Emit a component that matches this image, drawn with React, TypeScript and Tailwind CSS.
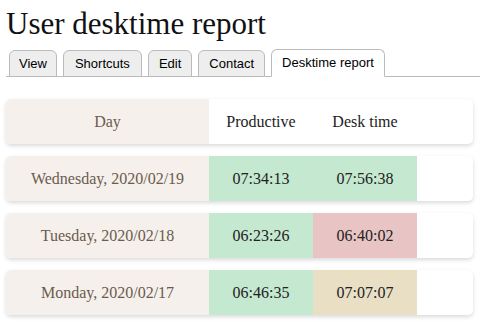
export default function App() {
  const tabs = [
    { label: 'View', pad: 'px-[9px]' },
    { label: 'Shortcuts', pad: 'px-[11px]' },
    { label: 'Edit', pad: 'px-[10px]' },
    { label: 'Contact', pad: 'px-[10px]' },
  ];
  const rows = [
    { day: 'Wednesday, 2020/02/19', prod: '07:34:13', desk: '07:56:38', deskBg: 'bg-[#c5e8d0]' },
    { day: 'Tuesday, 2020/02/18', prod: '06:23:26', desk: '06:40:02', deskBg: 'bg-[#e8c4c4]' },
    { day: 'Monday, 2020/02/17', prod: '06:46:35', desk: '07:07:07', deskBg: 'bg-[#e8dfc4]' },
  ];

  return (
    <div className="w-[480px] h-[322px] bg-white overflow-hidden font-['Liberation_Serif',serif]">
      {/* Title */}
      <h1 className="pl-[6px] pt-[6px] text-[31px] leading-[36px] text-[#111]">User desktime report</h1>

      {/* Tabs */}
      <div className="mt-[7px] ml-[6px] flex items-end gap-[6px] border-b border-[#bbb] pl-[3px] font-['Liberation_Sans',sans-serif] text-[13px] text-black">
        {tabs.map((t) => (
          <div
            key={t.label}
            className={`h-[27px] -mb-px flex items-center ${t.pad} bg-[#eee] border border-[#bbb] rounded-t-[6px]`}
          >
            {t.label}
          </div>
        ))}
        <div className="h-[28px] -mb-px flex items-center px-[10px] bg-white border border-[#bbb] border-b-white rounded-t-[6px]">
          Desktime report
        </div>
      </div>

      {/* Table */}
      <div className="mt-[22px] ml-[6px] w-[467px] flex flex-col gap-[12px] text-[16px]">
        <div className="h-[45px] flex rounded-[5px] overflow-hidden shadow-[0_2px_4px_rgba(0,0,0,0.15)] bg-white">
          <div className="w-[203px] bg-[#f5f0eb] flex items-center justify-center text-[#6b5b4f]">Day</div>
          <div className="w-[104px] flex items-center justify-center text-[#222]">Productive</div>
          <div className="w-[104px] flex items-center justify-center text-[#222]">Desk time</div>
          <div className="flex-1" />
        </div>
        {rows.map((r) => (
          <div
            key={r.day}
            className="h-[45px] flex rounded-[5px] overflow-hidden shadow-[0_2px_4px_rgba(0,0,0,0.15)] bg-white"
          >
            <div className="w-[203px] bg-[#f5f0eb] flex items-center justify-center text-[#6b5b4f]">{r.day}</div>
            <div className="w-[104px] bg-[#c5e8d0] flex items-center justify-center text-[#222]">{r.prod}</div>
            <div className={`w-[104px] ${r.deskBg} flex items-center justify-center text-[#222]`}>{r.desk}</div>
            <div className="flex-1" />
          </div>
        ))}
      </div>
    </div>
  );
}
